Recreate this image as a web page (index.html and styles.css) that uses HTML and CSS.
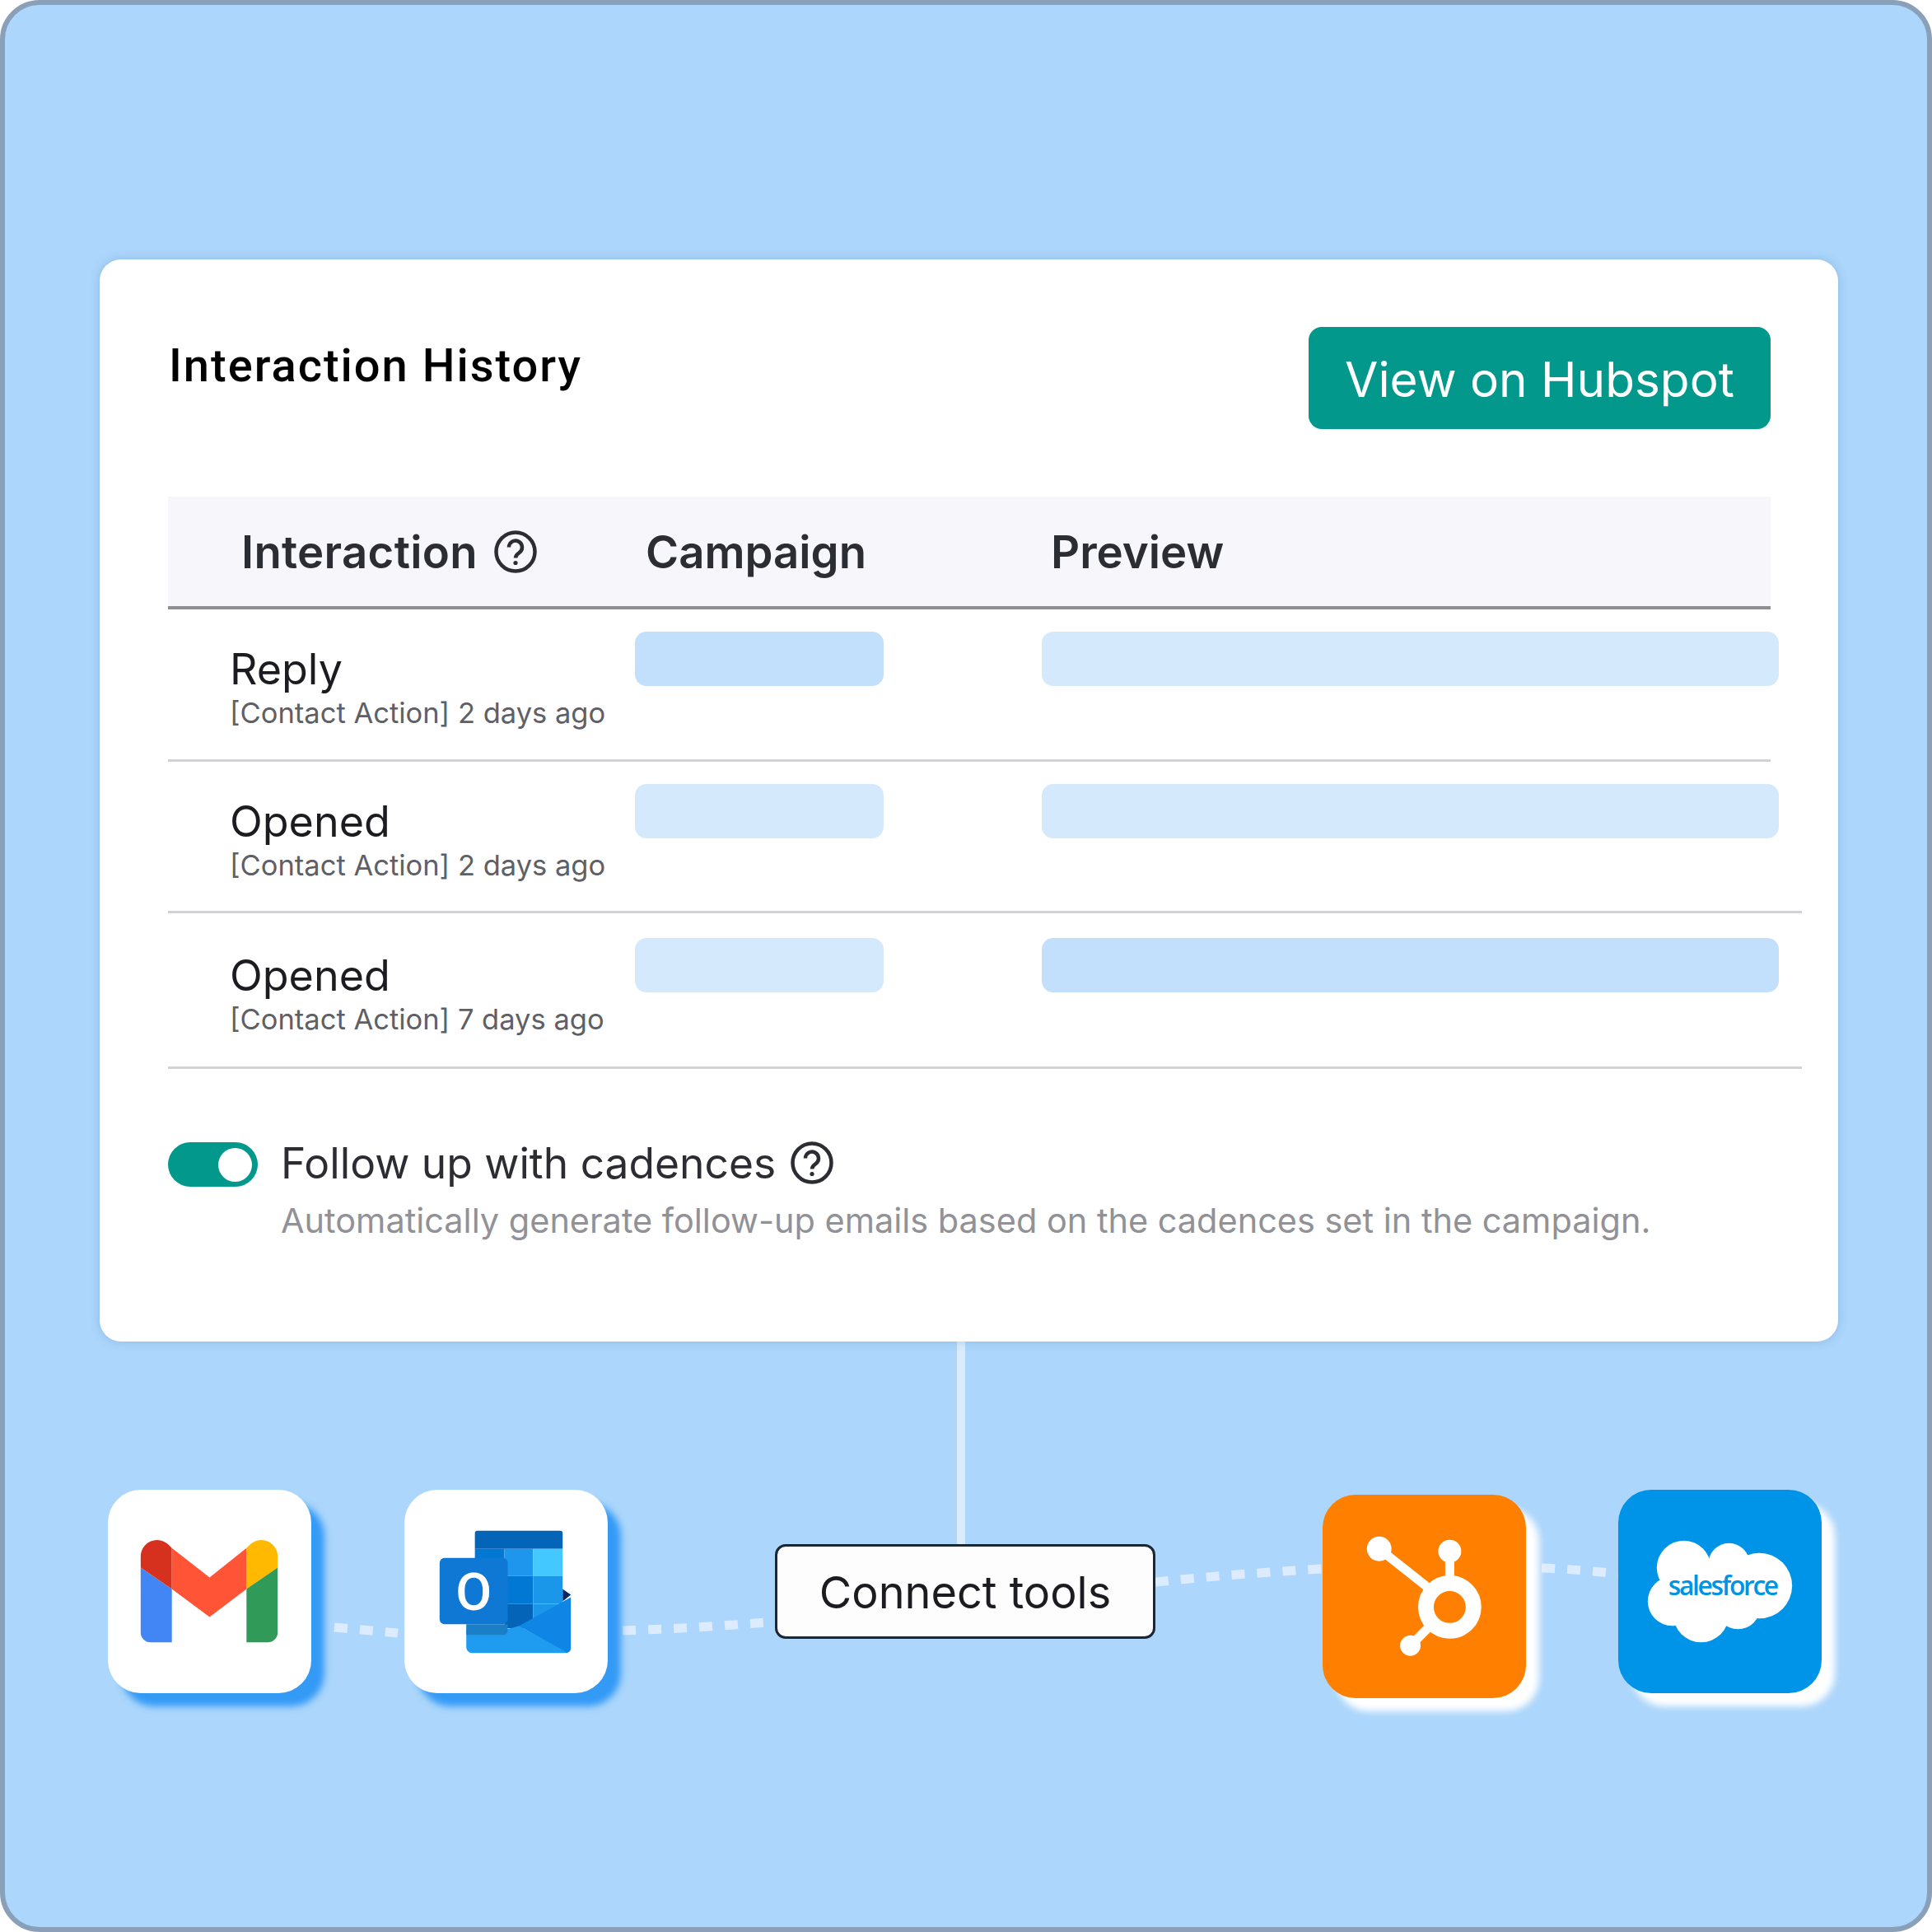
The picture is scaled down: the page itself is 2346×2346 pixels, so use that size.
FILE: index.html
```html
<!DOCTYPE html>
<html lang="en">
<head>
  <meta charset="utf-8">
  <title>Interaction History</title>
  <link rel="stylesheet" href="styles.css">
</head>
<body>
  <div class="frame">
    <!-- connectors, they sit under the card and the tiles -->
    <svg class="wires" viewBox="6 6 2334 2334" width="2334" height="2334">
      <path class="wire-solid" d="M1167 1629V1880"/>
      <path class="wire-dots" d="M406 1976L483 1983"/>
      <path class="wire-dots" d="M756 1980Q850 1977 941 1969"/>
      <path class="wire-dots" d="M1403 1921Q1500 1911 1606 1905"/>
      <path class="wire-dots" d="M1872 1904Q1920 1906 1965 1911"/>
    </svg>

    <div class="card">
      <div class="card-top">
        <h1 class="card-title">Interaction History</h1>
        <a class="btn-view">View on Hubspot</a>
      </div>

      <div class="table-head">
        <div class="head-cell head-first">
          Interaction
          <svg class="help" viewBox="0 0 52 52"><circle cx="26" cy="26" r="23.5"/><path d="M18 20.5a8 8 0 1 1 12.5 6.6c-3 2-4.5 3.400-4.500 6.400"/><circle class="help-dot" cx="26" cy="39.500" r="2.600"/></svg>
        </div>
        <div class="head-cell">Campaign</div>
        <div class="head-cell">Preview</div>
      </div>

      <div class="row">
        <div class="row-text">
          <div class="row-name">Reply</div>
          <div class="row-sub">[Contact Action] 2 days ago</div>
        </div>
        <div class="skel skel-small skel-dark"></div>
        <div class="skel skel-light"></div>
      </div>
      <div class="row row-wide">
        <div class="row-text">
          <div class="row-name">Opened</div>
          <div class="row-sub">[Contact Action] 2 days ago</div>
        </div>
        <div class="skel skel-small skel-light"></div>
        <div class="skel skel-light"></div>
      </div>
      <div class="row row-wide row-last">
        <div class="row-text">
          <div class="row-name">Opened</div>
          <div class="row-sub">[Contact Action] 7 days ago</div>
        </div>
        <div class="skel skel-small skel-light"></div>
        <div class="skel skel-dark"></div>
      </div>

      <div class="followup">
        <div class="toggle"><div class="toggle-knob"></div></div>
        <div>
          <div class="followup-title">
            Follow up with cadences
            <svg class="help" viewBox="0 0 52 52"><circle cx="26" cy="26" r="23.5"/><path d="M18 20.5a8 8 0 1 1 12.5 6.6c-3 2-4.5 3.400-4.500 6.400"/><circle class="help-dot" cx="26" cy="39.500" r="2.600"/></svg>
          </div>
          <div class="followup-desc">Automatically generate follow-up emails based on the cadences set in the campaign.</div>
        </div>
      </div>
    </div>

    <div class="tools">
      <div class="tile tile-white">
        <svg viewBox="0 0 248 248" width="247" height="247">
          <path fill="#4285f4" d="M40 95L78 121V186H52a12 12 0 0 1-12-12Z"/>
          <path fill="#d6311f" d="M40 95V81a20 20 0 0 1 34-14L78 71V121Z"/>
          <path fill="#ff5436" d="M78 71L124 107L169 71V121L124 155L78 121Z"/>
          <path fill="#ffb900" d="M169 71L173 67a20 20 0 0 1 34 14V95L169 121Z"/>
          <path fill="#309a58" d="M169 121L207 95V174a12 12 0 0 1-12 12H169Z"/>
        </svg>
      </div>
      <div class="tile tile-white">
        <svg viewBox="0 0 248 248" width="247" height="247">
          <path fill="#0a2767" d="M193 121L203 128L193 136Z"/>
          <path fill="#0364b8" d="M86 53a3 3 0 0 1 3-3H190a3 3 0 0 1 3 3V72H86Z"/>
          <rect fill="#0078d4" x="86" y="72" width="36" height="70"/>
          <rect fill="#1f96ee" x="122" y="72" width="35" height="33"/>
          <rect fill="#43c8ff" x="157" y="72" width="36" height="33"/>
          <rect fill="#0078d4" x="122" y="105" width="35" height="34"/>
          <rect fill="#1b97ea" x="157" y="105" width="36" height="34"/>
          <rect fill="#0364b8" x="122" y="139" width="35" height="30"/>
          <path fill="#1b97ea" d="M157 139H193V146L157 172Z"/>
          <path fill="#0f85e5" d="M140 166L203 131V193a6 6 0 0 1-6 6L140 166Z"/>
          <path fill="#1f9cf0" d="M75.500 170H126L140 166L198 198Q196 199 194 199H83a7 7 0 0 1-7.500-7Z"/>
          <path fill="#1a7fc6" d="M75.500 170V164H126V172a5 5 0 0 1-5 5H75.500Z"/>
          <rect fill="#0f78d4" x="43" y="83" width="83" height="81" rx="6"/>
          <text class="outlook-o" x="84.500" y="147" text-anchor="middle">O</text>
        </svg>
      </div>
      <div class="connect-pill">Connect tools</div>
      <div class="tile tile-orange">
        <svg viewBox="0 0 248 248" width="247" height="247">
          <circle class="hub-ring" cx="155" cy="137" r="29"/>
          <path class="hub-arm" d="M69 66L132 116M155 69V106M107 184L131 160"/>
          <circle fill="#fff" cx="69" cy="66" r="15"/>
          <circle fill="#fff" cx="155" cy="69" r="14"/>
          <circle fill="#fff" cx="107" cy="184" r="12.500"/>
        </svg>
      </div>
      <div class="tile tile-blue">
        <svg viewBox="0 0 248 248" width="247" height="247">
          <g fill="#fff">
            <circle cx="80" cy="95" r="33"/>
            <circle cx="135" cy="90" r="25"/>
            <circle cx="172" cy="117" r="40"/>
            <circle cx="66" cy="136" r="30"/>
            <circle cx="101" cy="152" r="34"/>
            <circle cx="146" cy="143" r="27"/>
            <rect x="70" y="90" width="100" height="60"/>
          </g>
          <text class="sf-word" x="61" y="129" textLength="135">salesforce</text>
        </svg>
      </div>
    </div>
  </div>
</body>
</html>
```

FILE: styles.css
```css
* {
  box-sizing: border-box;
}

body {
  margin: 0;
  background-color: #fff;
  font-family: Inter, "Liberation Sans", sans-serif;
}

.frame {
  position: relative;
  width: 2346px;
  height: 2346px;
  padding: 309px 0 0 115px;
  border: 6px solid #8aa0b8;
  border-radius: 48px;
  background-color: #acd6fb;
  overflow: hidden;
}

.wires {
  position: absolute;
  top: 0;
  left: 0;
}

.wire-solid {
  fill: none;
  stroke: #dcebfd;
  stroke-width: 10;
}

.wire-dots {
  fill: none;
  stroke: #dcebfd;
  stroke-width: 11;
  stroke-dasharray: 16 15;
}

/* main card */
.card {
  position: relative;
  width: 2111px;
  height: 1314px;
  padding: 82px 0 0 83px;
  border-radius: 26px;
  background-color: #fff;
  box-shadow: 0 0 12px rgba(60, 110, 170, 0.28);
}

.card-top {
  display: flex;
  justify-content: space-between;
  align-items: flex-start;
  width: 1946px;
}

.card-title {
  margin: 14px 0 0 1px;
  font-family: Roboto, sans-serif;
  font-size: 56px;
  line-height: 66px;
  font-weight: 500;
  letter-spacing: 2px;
  color: #000;
}

.btn-view {
  display: flex;
  align-items: center;
  justify-content: center;
  width: 561px;
  height: 124px;
  padding-top: 2px;
  border-radius: 16px;
  background-color: #02998c;
  color: #fff;
  font-size: 58.500px;
}

.table-head {
  display: grid;
  grid-template-columns: 580px 492px 1fr;
  align-items: center;
  width: 1946px;
  height: 137px;
  margin-top: 82px;
  padding: 1px 0 0 0;
  border-bottom: 4px solid #8e8e93;
  background-color: #f6f6fb;
}

.head-cell {
  display: flex;
  align-items: center;
  gap: 20px;
  font-size: 54.500px;
  font-weight: 600;
  color: #2c2c33;
}

.head-first {
  padding-left: 89px;
  letter-spacing: 0.3px;
}

.help {
  flex: none;
  width: 52px;
  height: 52px;
  fill: none;
  stroke: #2c2c33;
  stroke-width: 4.5;
}

.help-dot {
  fill: #2c2c33;
  stroke: none;
}

.row {
  display: grid;
  grid-template-columns: 567px 494px 895px;
  width: 1946px;
  height: 185px;
  padding-top: 27px;
  border-bottom: 3px solid #d2d2d6;
}

.row-wide {
  width: 1984px;
  height: 184px;
}

.row-last {
  height: 189px;
  padding-top: 30px;
}

.row-text {
  padding: 16px 0 0 75px;
}

.row-name {
  font-size: 52px;
  line-height: 59px;
  color: #1c1c20;
}

.row-sub {
  font-size: 34.500px;
  line-height: 48px;
  color: #5f5f66;
}

.skel {
  height: 66px;
  border-radius: 14px;
}

.skel-small {
  width: 302px;
}

.skel-dark {
  background-color: #c2dffb;
}

.skel-light {
  background-color: #d5e9fd;
}

.followup {
  display: flex;
  align-items: flex-start;
  gap: 28px;
  margin-top: 83px;
}

.toggle {
  flex: none;
  display: flex;
  justify-content: flex-end;
  align-items: center;
  width: 109px;
  height: 54px;
  margin-top: 6px;
  padding-right: 7px;
  border-radius: 27px;
  background-color: #02998c;
}

.toggle-knob {
  width: 41px;
  height: 41px;
  border-radius: 50%;
  background-color: #fff;
}

.followup-title {
  display: flex;
  align-items: center;
  gap: 18px;
  font-size: 51.500px;
  line-height: 62px;
  color: #2c2c33;
}

.followup-desc {
  margin-top: 14px;
  font-size: 41.450px;
  line-height: 50px;
  color: #919196;
}

/* tools row */
.tools {
  position: relative;
  display: flex;
  align-items: flex-start;
  margin: 180px 0 0 10px;
}

.tile {
  flex: none;
  width: 247px;
  height: 247px;
  border-radius: 40px;
}

.tile svg {
  display: block;
}

.tile-white {
  background-color: #fff;
  box-shadow: 16px 16px 8px #339af6;
}

.tile-white + .tile-white {
  margin-left: 113px;
}

.tile-orange {
  margin: 6px 0 0 203px;
  background-color: #ff7f00;
  box-shadow: 16px 16px 8px #fff;
}

.tile-blue {
  margin-left: 112px;
  background-color: #0094e8;
  box-shadow: 16px 16px 8px #fff;
}

.connect-pill {
  flex: none;
  display: flex;
  align-items: center;
  justify-content: center;
  width: 462px;
  height: 115px;
  margin: 66px 0 0 203px;
  padding-top: 2px;
  border: 3px solid #1b2733;
  border-radius: 13px;
  background-color: #fdfdfe;
  font-size: 54px;
  color: #1c1c20;
}

.outlook-o {
  font-family: Roboto, sans-serif;
  font-size: 64px;
  font-weight: 500;
  fill: #fff;
}

.hub-ring {
  fill: none;
  stroke: #fff;
  stroke-width: 19;
}

.hub-arm {
  fill: none;
  stroke: #fff;
  stroke-width: 11;
}

.sf-word {
  font-family: "Open Sans", sans-serif;
  font-size: 32px;
  font-weight: 600;
  fill: #0094e4;
}
```
